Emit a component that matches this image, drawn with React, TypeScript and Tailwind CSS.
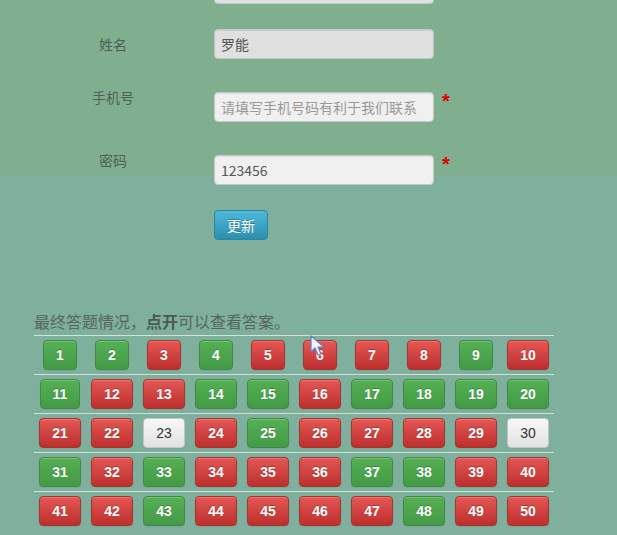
import React from "react";

type Result = "right" | "wrong" | "blank";

// 1-50 answer status, read row by row
const results: Result[] = (
  "rrwrwwwwrw" +
  "rwwrrwrrrr" +
  "wwbwrwwwwb" +
  "rwrwwwrrww" +
  "wwrwwwwrww"
)
  .split("")
  .map((c) => (c === "r" ? "right" : c === "w" ? "wrong" : "blank"));

const btnClass: Record<Result, string> = {
  right:
    "bg-[linear-gradient(to_bottom,#54b054,#449a46)] border-[#3f8a40] text-white font-bold [text-shadow:0_-1px_0_rgba(0,0,0,0.25)]",
  wrong:
    "bg-[linear-gradient(to_bottom,#e55754,#bd2f2c)] border-[#a8302d] text-white font-bold [text-shadow:0_-1px_0_rgba(0,0,0,0.25)]",
  blank:
    "bg-[linear-gradient(to_bottom,#f8f8f8,#e2e2e2)] border-[#c4c8c6] text-[#333]",
};

const cjk = "font-['Noto_Sans_CJK_SC','Liberation_Sans',sans-serif]";

function Field({
  label,
  value,
  placeholder,
  readOnly,
  required,
  labelClass,
}: {
  label: string;
  value?: string;
  placeholder?: string;
  readOnly?: boolean;
  required?: boolean;
  labelClass: string;
}) {
  return (
    <div className="flex items-start">
      <div
        className={`w-[158px] mr-[22px] text-center text-[14px] leading-5 text-[#4f5e55] ${labelClass}`}
      >
        {label}
      </div>
      <input
        type="text"
        readOnly
        defaultValue={value}
        placeholder={placeholder}
        className={`w-[220px] h-[30px] px-[6px] rounded-[4px] border border-[#c2cac5] text-[14px] text-[#555] placeholder:text-[#999] shadow-[inset_0_1px_1px_rgba(0,0,0,0.08)] outline-none ${
          readOnly ? "bg-[#e0e0e0]" : "bg-[#f0f0f0]"
        }`}
      />
      {required && (
        <span className="ml-[8px] mt-[-3px] text-[20px] leading-6 font-bold text-[#e00000] font-['Liberation_Sans',sans-serif]">
          *
        </span>
      )}
    </div>
  );
}

export default function App() {
  const rows = [0, 1, 2, 3, 4].map((r) => results.slice(r * 10, r * 10 + 10));

  return (
    <div
      className={`relative w-[617px] h-[535px] overflow-hidden bg-[linear-gradient(to_bottom,#80af8f_175px,#7fb09e_175px)] pl-[34px] ${cjk}`}
    >
      {/* form */}
      <div className="flex flex-col">
        <div className="flex">
          <div className="w-[158px] mr-[22px]" />
          <div className="w-[220px] h-[30px] -mt-[26px] rounded-[4px] border border-[#c2cac5] bg-[#e0e0e0]" />
        </div>
        <div className="mt-[25px]">
          <Field label="姓名" value="罗能" readOnly labelClass="mt-[5px]" />
        </div>
        <div className="mt-[33px]">
          <Field
            label="手机号"
            placeholder="请填写手机号码有利于我们联系"
            required
            labelClass="-mt-[5px]"
          />
        </div>
        <div className="mt-[33px]">
          <Field label="密码" value="123456" required labelClass="-mt-[5px]" />
        </div>
        <div className="flex mt-[25px]">
          <div className="w-[158px] mr-[22px]" />
          <button className="w-[54px] h-[30px] rounded-[4px] border border-[#2a86a3] bg-[linear-gradient(to_bottom,#4fb9da,#2d8fb0)] text-white text-[14px] [text-shadow:0_-1px_0_rgba(0,0,0,0.25)]">
            更新
          </button>
        </div>
      </div>

      {/* answers */}
      <p className="mt-[70px] text-[16px] leading-[22px] text-[#56665c]">
        最终答题情况，<b className="font-bold text-[#4a5a50]">点开</b>
        可以查看答案。
      </p>
      <div className="mt-[3px] w-[520px] flex flex-col">
        {rows.map((row, ri) => (
          <div key={ri} className="flex h-[39px] border-t border-[#d3e2d9]">
            {row.map((res, ci) => {
              const n = ri * 10 + ci + 1;
              return (
                <div key={n} className="w-[52px] flex justify-center pt-[4px]">
                  <button
                    className={`px-3 h-[30px] rounded-[4px] border text-[14px] leading-5 font-['Liberation_Sans',sans-serif] shadow-[inset_0_1px_0_rgba(255,255,255,0.2),0_1px_2px_rgba(0,0,0,0.05)] ${btnClass[res]}`}
                  >
                    {n}
                  </button>
                </div>
              );
            })}
          </div>
        ))}
      </div>

      {/* mouse pointer */}
      <svg
        className="absolute left-[310px] top-[335px]"
        width="16"
        height="22"
        viewBox="0 0 16 22"
      >
        <path
          d="M1 1 L1 17 L5 13 L8 20 L11 19 L8 12 L14 12 Z"
          fill="#eef2fb"
          stroke="#6b7fb8"
          strokeWidth="1.2"
          strokeLinejoin="round"
        />
      </svg>
    </div>
  );
}
